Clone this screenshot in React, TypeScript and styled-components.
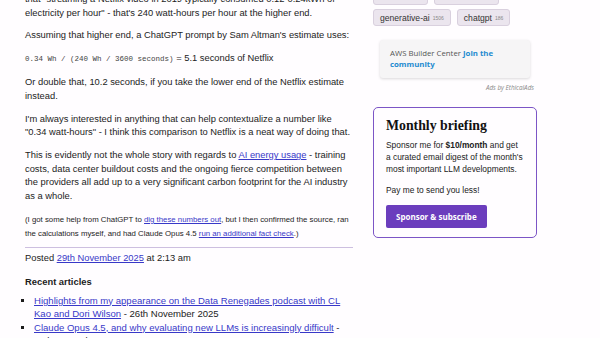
import React from "react";
import styled, { createGlobalStyle } from "styled-components";

const Global = createGlobalStyle`
  html, body { margin: 0; padding: 0; background: #fffdff; }
  body { font-family: "Liberation Sans", Arial, sans-serif; color: #1c1c1c; overflow: hidden; }
  a { color: #3838c8; text-decoration: underline; }
`;

const Page = styled.div`
  display: flex;
  gap: 20px;
  padding-left: 25px;
  margin-top: -7px;
`;

const Main = styled.div`
  width: 328px;
  flex: none;
  font-size: 9.35px;
  line-height: 13.6px;
`;

const P = styled.p`
  margin: 0 0 9.3px 0;
`;

const Small = styled.p`
  margin: 0;
  font-size: 7.8px;
  line-height: 14px;
`;

const Code = styled.code`
  font-family: "Liberation Mono", "Courier New", monospace;
  font-size: 7.5px;
  color: #444;
`;

const Divider = styled.hr`
  border: none;
  border-top: 1.5px solid #cdbfe0;
  margin: 6px 0 4px 0;
`;

const Posted = styled.p`
  margin: 0 0 9px 0;
`;

const H3 = styled.h3`
  font-size: 9.4px;
  font-weight: bold;
  margin: 0 0 6px 0;
  line-height: 13px;
`;

const List = styled.ul`
  margin: 0;
  padding-left: 9px;
  list-style: square;
  font-size: 9.55px;
`;

const Item = styled.li`
  margin: 0;
`;

const Side = styled.div`
  width: 164px;
  flex: none;
  padding-top: 1px;
`;

const Tags = styled.div`
  display: flex;
  flex-wrap: wrap;
  gap: 6px;
`;

const Tag = styled.span<{ $w?: number }>`
  display: inline-flex;
  align-items: center;
  gap: 3px;
  height: 17px;
  box-sizing: border-box;
  padding: 0 6px;
  background: #ebe5ee;
  border: 1px solid #d9d0de;
  border-radius: 3px;
  font-size: 8.6px;
  color: #333;
  ${p => (p.$w ? `width: ${p.$w}px;` : "")}
`;

const Count = styled.span`
  font-size: 5px;
  color: #888;
`;

const TopRow = styled(Tags)`
  margin-top: -6px;
  margin-bottom: 4px;
`;

const Ad = styled.div`
  margin: 14px 0 0 7px;
  width: 150px;
  box-sizing: border-box;
  padding: 7.5px 10px 8.5px 10px;
  background: #f6f5f6;
  border-radius: 3px;
  box-shadow: 0 1px 3px rgba(0, 0, 0, 0.15);
  font-family: "Open Sans", "Liberation Sans", sans-serif;
  font-size: 7.8px;
  line-height: 11px;
  color: #555;
`;

const AdLink = styled.b`
  color: #1f8bd0;
`;

const AdCredit = styled.div`
  width: 161px;
  text-align: right;
  font-family: "Open Sans", sans-serif;
  font-style: italic;
  font-size: 6.3px;
  line-height: 8px;
  color: #888;
  margin-top: 6px;
`;

const Box = styled.div`
  margin-top: 15px;
  border: 1.3px solid #7c55c6;
  border-radius: 5px;
  padding: 10px 10.5px 8.5px 12px;
`;

const BoxTitle = styled.h2`
  margin: 0 0 5px 0;
  font-family: "Liberation Serif", "DejaVu Serif", serif;
  font-size: 13.8px;
  line-height: 16px;
  font-weight: bold;
  color: #111;
`;

const BoxText = styled.p`
  margin: 0 0 9px 0;
  font-size: 8.4px;
  line-height: 12px;
  color: #222;
`;

const Button = styled.button`
  display: block;
  border: none;
  background: #6b3dbd;
  color: #fff;
  font-family: "Open Sans", "Liberation Sans", sans-serif;
  font-weight: bold;
  font-size: 8px;
  height: 23px;
  padding: 0 10px;
  border-radius: 2px;
  margin-top: 5px;
`;

export default function App() {
  return (
    <>
      <Global />
      <Page>
        <Main>
          <P>
            that "streaming a Netflix video in 2019 typically consumed 0.12-0.24kWh of
            electricity per hour" - that's 240 watt-hours per hour at the higher end.
          </P>
          <P>Assuming that higher end, a ChatGPT prompt by Sam Altman's estimate uses:</P>
          <P>
            <Code>0.34 Wh / (240 Wh / 3600 seconds)</Code> = 5.1 seconds of Netflix
          </P>
          <P>
            Or double that, 10.2 seconds, if you take the lower end of the Netflix estimate
            instead.
          </P>
          <P>
            I'm always interested in anything that can help contextualize a number like
            "0.34 watt-hours" - I think this comparison to Netflix is a neat way of doing that.
          </P>
          <P>
            This is evidently not the whole story with regards to <a href="#">AI energy usage</a> - training
            costs, data center buildout costs and the ongoing fierce competition between
            the providers all add up to a very significant carbon footprint for the AI industry
            as a whole.
          </P>
          <Small>
            (I got some help from ChatGPT to <a href="#">dig these numbers out</a>, but I then confirmed the source, ran
            the calculations myself, and had Claude Opus 4.5 <a href="#">run an additional fact check</a>.)
          </Small>
          <Divider />
          <Posted>
            Posted <a href="#">29th November 2025</a> at 2:13 am
          </Posted>
          <H3>Recent articles</H3>
          <List>
            <Item>
              <a href="#">Highlights from my appearance on the Data Renegades podcast with CL Kao and Dori Wilson</a> - 26th November 2025
            </Item>
            <Item>
              <a href="#">Claude Opus 4.5, and why evaluating new LLMs is increasingly difficult</a> - 24th November 2025
            </Item>
          </List>
        </Main>
        <Side>
          <TopRow>
            <Tag $w={55}>&nbsp;</Tag>
            <Tag $w={65}>&nbsp;</Tag>
          </TopRow>
          <Tags>
            <Tag>generative-ai <Count>1506</Count></Tag>
            <Tag>chatgpt <Count>186</Count></Tag>
          </Tags>
          <Ad>
            AWS Builder Center <AdLink>Join the community</AdLink>
          </Ad>
          <AdCredit>Ads by EthicalAds</AdCredit>
          <Box>
            <BoxTitle>Monthly briefing</BoxTitle>
            <BoxText>
              Sponsor me for <b>$10/month</b> and get<br />a curated email digest of the month's
              most important LLM developments.
            </BoxText>
            <BoxText>Pay me to send you less!</BoxText>
            <Button>Sponsor &amp; subscribe</Button>
          </Box>
        </Side>
      </Page>
    </>
  );
}
